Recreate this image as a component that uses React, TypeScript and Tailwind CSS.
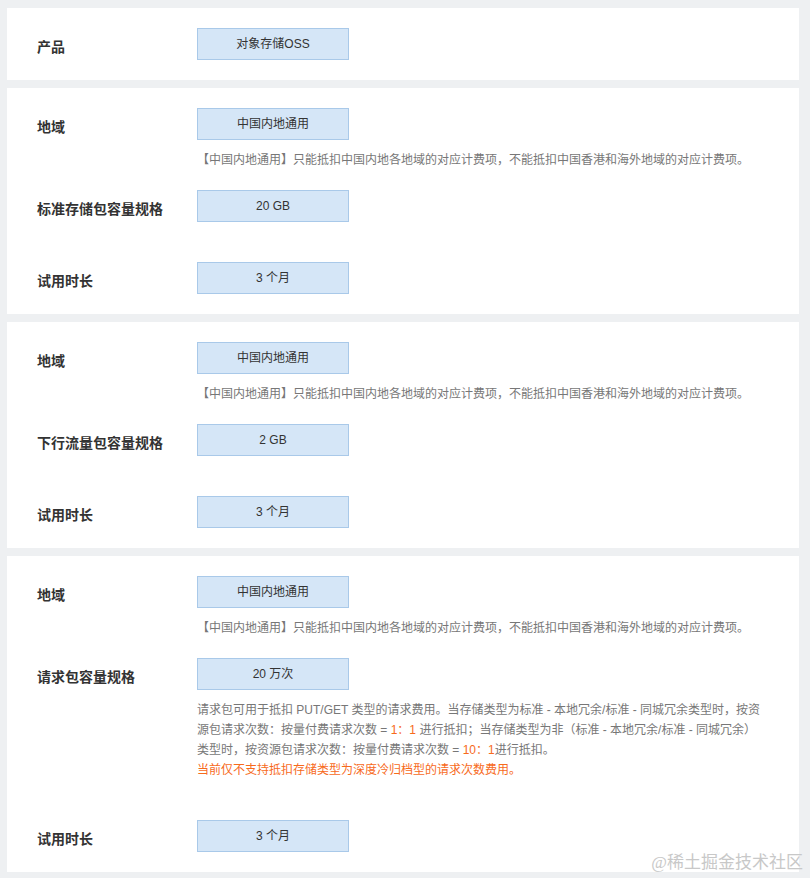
const font = "font-['Helvetica_Neue','Liberation_Sans','Noto_Sans_CJK_SC',sans-serif]"

function Box({ text }: { text: string }) {
  return (
    <div className="w-[152px] h-8 flex items-center justify-center bg-[#d5e6f7] border border-[#a9c9e9] text-xs text-[#333]">
      {text}
    </div>
  )
}

interface RowProps {
  label: string
  value: string
  children?: React.ReactNode
  className?: string
}

function Row({ label, value, children, className = '' }: RowProps) {
  return (
    <div className={`flex ${className}`}>
      <div className="w-[160px] shrink-0 pt-[9px] text-sm font-bold text-[#333]">{label}</div>
      <div className="flex-1">
        <Box text={value} />
        {children}
      </div>
    </div>
  )
}

const regionTip =
  '【中国内地通用】只能抵扣中国内地各地域的对应计费项，不能抵扣中国香港和海外地域的对应计费项。'

function RegionRow() {
  return (
    <Row label="地域" value="中国内地通用" className="mb-5">
      <p className="mt-2.5 text-xs leading-5 text-[#777]">{regionTip}</p>
    </Row>
  )
}

function Card({ children }: { children: React.ReactNode }) {
  return <div className="bg-white pl-[30px] pr-4 py-5">{children}</div>
}

export default function App() {
  return (
    <div className={`relative min-h-[878px] bg-[#eef0f2] pl-[7px] pr-[11px] pt-2 pb-[6px] flex flex-col gap-2 ${font}`}>
      <Card>
        <Row label="产品" value="对象存储OSS" />
      </Card>

      <Card>
        <RegionRow />
        <Row label="标准存储包容量规格" value="20 GB" className="mb-10" />
        <Row label="试用时长" value="3 个月" />
      </Card>

      <Card>
        <RegionRow />
        <Row label="下行流量包容量规格" value="2 GB" className="mb-10" />
        <Row label="试用时长" value="3 个月" />
      </Card>

      <Card>
        <RegionRow />
        <Row label="请求包容量规格" value="20 万次" className="mb-10">
          <div className="mt-2.5 text-xs leading-5 text-[#777]">
            <div>请求包可用于抵扣 PUT/GET 类型的请求费用。当存储类型为标准 - 本地冗余/标准 - 同城冗余类型时，按资</div>
            <div>
              源包请求次数：按量付费请求次数 = <span className="text-[#f76a1c]">1：1</span> 进行抵扣；当存储类型为非（标准 - 本地冗余/标准 - 同城冗余）
            </div>
            <div>
              类型时，按资源包请求次数：按量付费请求次数 = <span className="text-[#f76a1c]">10：1</span>进行抵扣。
            </div>
            <div className="text-[#f76a1c]">当前仅不支持抵扣存储类型为深度冷归档型的请求次数费用。</div>
          </div>
        </Row>
        <Row label="试用时长" value="3 个月" />
      </Card>

      <div className="absolute right-[7px] bottom-[3px] text-[17px] leading-6 text-[#c8c8c8] font-['Liberation_Serif','Noto_Sans_CJK_SC',serif]">
        @稀土掘金技术社区
      </div>
    </div>
  )
}
